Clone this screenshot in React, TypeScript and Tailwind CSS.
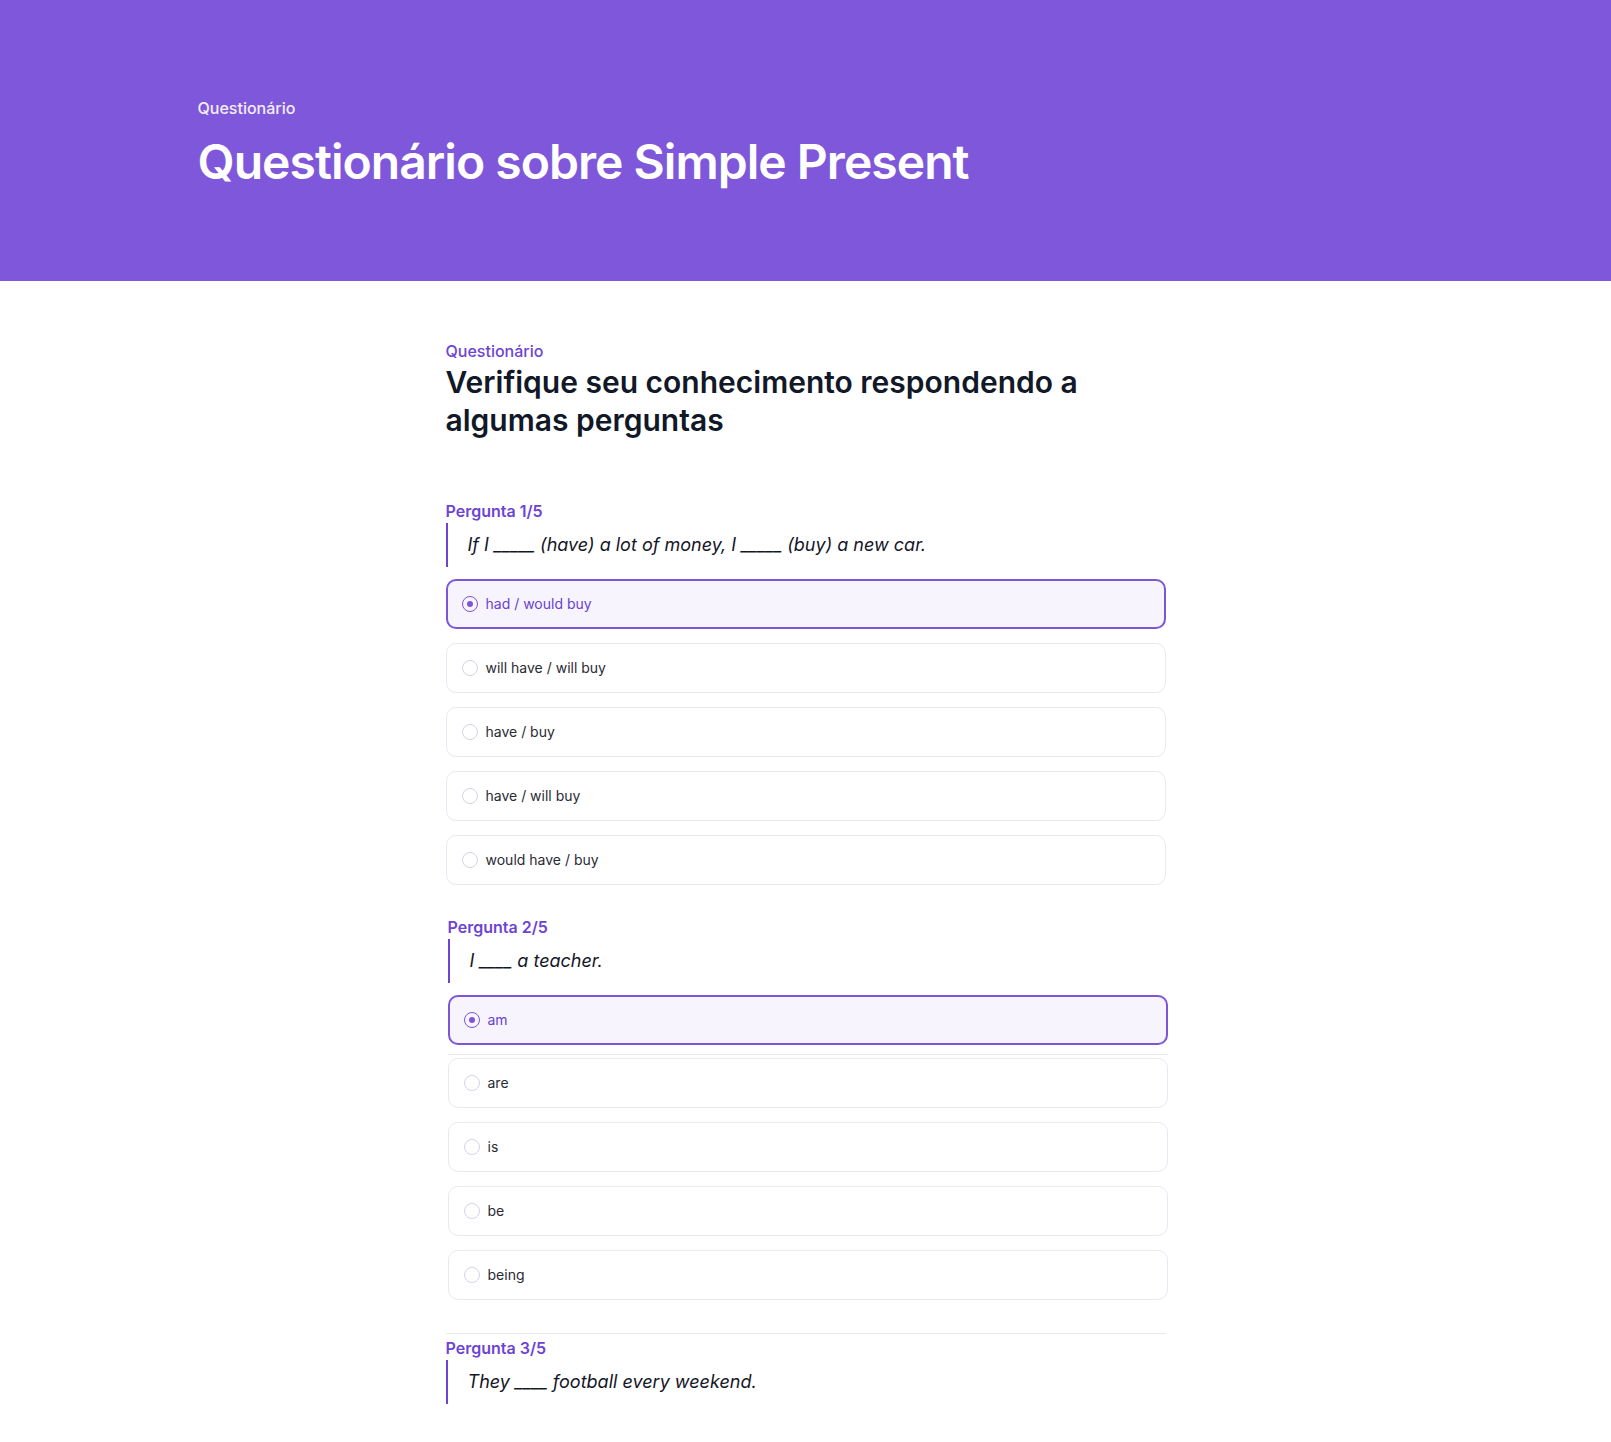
import { useState } from "react";

type Question = {
  text: string;
  options: string[];
  shift?: boolean;
  divided?: boolean;
};

const questions: Question[] = [
  {
    text: "If I _____ (have) a lot of money, I _____ (buy) a new car.",
    options: ["had / would buy", "will have / will buy", "have / buy", "have / will buy", "would have / buy"],
  },
  {
    text: "I ____ a teacher.",
    options: ["am", "are", "is", "be", "being"],
    shift: true,
  },
  {
    text: "They ____ football every weekend.",
    options: [],
    divided: true,
  },
];

function Radio({ checked }: { checked: boolean }) {
  if (checked) {
    return (
      <span className="flex h-4 w-4 shrink-0 items-center justify-center rounded-full border-[1.5px] border-[#7c55d8]">
        <span className="h-1.5 w-1.5 rounded-full bg-[#7c55d8]" />
      </span>
    );
  }
  return <span className="h-4 w-4 shrink-0 rounded-full border border-[#d6d4e0] bg-white" />;
}

function Option({ label, checked, onPick }: { label: string; checked: boolean; onPick: () => void }) {
  return (
    <button
      type="button"
      onClick={onPick}
      className={
        checked
          ? "flex h-[50px] w-full items-center gap-2 rounded-[10px] border-2 border-[#7c55d8] bg-[#f7f4fe] pl-[14px] text-left text-sm text-[#6a3fd1]"
          : "flex h-[50px] w-full items-center gap-2 rounded-[10px] border border-[#e9e7f1] bg-white pl-[15px] text-left text-sm text-[#2a2a35]"
      }
    >
      <Radio checked={checked} />
      <span>{label}</span>
    </button>
  );
}

function QuestionBlock({ q, index, total }: { q: Question; index: number; total: number }) {
  const [picked, setPicked] = useState(0);

  return (
    <section
      className={
        (q.shift ? "ml-[2px] -mr-[2px] " : "") +
        (q.divided ? "mt-[33px] border-t border-[#e8e7ee] pt-[2px]" : index === 0 ? "mt-[60px]" : "mt-[30px]")
      }
    >
      <p className="text-base leading-6 font-semibold text-[#6d44d4]">
        Pergunta {index + 1}/{total}
      </p>
      <blockquote className="border-l-2 border-[#6d44d4] py-2 pl-5 text-lg leading-7 italic text-[#141627]">
        {q.text}
      </blockquote>
      {q.options.map((opt, i) => (
        <div
          key={opt}
          className={
            i === 0
              ? "mt-3"
              : q.shift && i === 1
                ? "mt-[9px] border-t border-[#e8e7ee] pt-[3px]"
                : "mt-[14px]"
          }
        >
          <Option label={opt} checked={picked === i} onPick={() => setPicked(i)} />
        </div>
      ))}
    </section>
  );
}

export default function App() {
  return (
    <div className="min-h-screen bg-white font-['Inter','Noto_Sans',sans-serif] antialiased">
      <header className="bg-[#7f57da]">
        <div className="mx-auto max-w-7xl px-8 pt-24 pb-[95px]">
          <p className="text-base leading-6 font-medium text-white/90">Questionário</p>
          <h1 className="mt-[18px] text-5xl leading-[48px] font-semibold tracking-[-0.02em] text-white">
            Questionário sobre Simple Present
          </h1>
        </div>
      </header>

      <main className="mx-auto max-w-[720px] pt-[58px] pb-[39px]">
        <p className="text-base leading-6 font-medium text-[#6d44d4]">Questionário</p>
        <h2 className="text-3xl leading-[38px] font-semibold text-[#111827]">
          Verifique seu conhecimento respondendo a algumas perguntas
        </h2>

        {questions.map((q, i) => (
          <QuestionBlock key={q.text} q={q} index={i} total={5} />
        ))}
      </main>
    </div>
  );
}
